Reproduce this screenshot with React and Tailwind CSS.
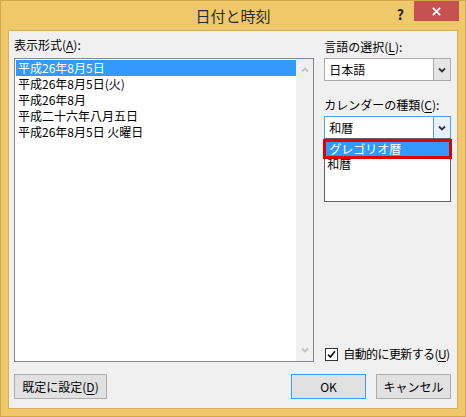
import { useState } from "react";

const font = { fontFamily: '"Noto Sans CJK JP", "Noto Sans", sans-serif' };

const U = ({ children }) => <span className="underline underline-offset-2">{children}</span>;

const formats = [
    "平成26年8月5日",
    "平成26年8月5日(火)",
    "平成26年8月",
    "平成二十六年八月五日",
    "平成26年8月5日 火曜日",
];

const Chevron = ({ className }) => (
    <svg viewBox="0 0 8 6" className={className}>
        <path d="M1 1.5 L4 4.5 L7 1.5" fill="none" stroke="currentColor" strokeWidth="1.8" />
    </svg>
);

const Combo = ({ value, active }) => (
    <div className={`flex h-[23px] border bg-white ${active ? "border-[#569de5]" : "border-[#acacac]"}`}>
        <div className="flex-1 flex items-center pl-[4px] text-[12px] leading-4 text-black">{value}</div>
        <div className={`w-[17px] flex items-center justify-center border-l ${active ? "bg-[#e5f1fb] border-[#569de5]" : "bg-[#e5e5e5] border-[#acacac]"}`}>
            <Chevron className="w-[8px] h-[6px] text-[#333]" />
        </div>
    </div>
);

const Button = ({ children, primary, className = "" }) => (
    <button
        className={`h-[25px] bg-[#e1e1e1] border text-[12px] leading-4 text-black ${primary ? "border-[#3c9bea]" : "border-[#adadad]"} ${className}`}
    >
        {children}
    </button>
);

const App = () => {
    const [selected, setSelected] = useState(0);
    const [auto, setAuto] = useState(true);

    return (
        <div style={font} className="w-[466px] h-[417px] flex flex-col bg-[#f0c86c] border border-[#d2a84c] select-none">
            {/* title bar */}
            <div className="h-[29px] flex items-start relative">
                <div className="flex-1 text-center pt-[5px] text-[15px] leading-5 text-[#2b2b2b]">日付と時刻</div>
                <div className="absolute right-[61px] top-[3px] text-[14px] font-bold text-[#222]">?</div>
                <div className="absolute right-[6px] top-0 w-[45px] h-[20px] bg-[#c75050] flex items-center justify-center">
                    <svg viewBox="0 0 10 10" className="w-[9px] h-[9px]">
                        <path d="M1 1 L9 9 M9 1 L1 9" stroke="white" strokeWidth="2" />
                    </svg>
                </div>
            </div>

            {/* client */}
            <div className="flex-1 mx-[7px] mb-[7px] bg-[#f0f0f0] border border-[#d6b05c] flex flex-col pl-[5px] pr-[6px] pt-[6px] pb-[9px]">
                <div className="flex-1 flex gap-[10px]">
                    {/* left column */}
                    <div className="w-[301px] flex flex-col">
                        <div className="text-[12px] leading-4 text-black h-[21px]">
                            表示形式(<U>A</U>):
                        </div>
                        <div className="h-[304px] flex border border-[#828790] bg-white">
                            <div className="flex-1 pt-[1px] pl-[1px]">
                                {formats.map((f, i) => (
                                    <div
                                        key={f}
                                        onClick={() => setSelected(i)}
                                        className={`h-[16px] pl-[2px] text-[12px] leading-4 ${selected === i ? "bg-[#3399ff] text-white" : "text-black"}`}
                                    >
                                        {f}
                                    </div>
                                ))}
                            </div>
                            <div className="w-[17px] bg-[#f0f0f0] flex flex-col items-center justify-between py-[8px]">
                                <Chevron className="w-[8px] h-[6px] text-[#c2c2c2] rotate-180" />
                                <Chevron className="w-[8px] h-[6px] text-[#c2c2c2]" />
                            </div>
                        </div>
                    </div>

                    {/* right column */}
                    <div className="w-[127px] flex flex-col">
                        <div className="text-[12px] leading-4 text-black h-[21px] pt-[2px]">
                            言語の選択(<U>L</U>):
                        </div>
                        <Combo value="日本語" />
                        <div className="text-[12px] leading-4 text-black h-[35px] pt-[16px]">
                            カレンダーの種類(<U>C</U>):
                        </div>
                        <div className="relative">
                            <Combo value="和暦" active />
                            <div className="absolute left-0 right-0 top-[22px] h-[64px] bg-white border border-[#646464]">
                                <div className="relative z-10 -mx-[2px] h-[20px] border-[3px] border-[#e00000] bg-[#3399ff] flex items-center pl-[3px] text-[12px] leading-4 text-white">
                                    グレゴリオ暦
                                </div>
                                <div className="-mt-[3px] pl-[2px] text-[12px] leading-4 text-black">和暦</div>
                            </div>
                        </div>
                        <div className="mt-auto flex items-center gap-[5px] pl-[1px]">
                            <div
                                onClick={() => setAuto(!auto)}
                                className="shrink-0 w-[13px] h-[13px] border border-[#333] bg-white flex items-center justify-center"
                            >
                                {auto && (
                                    <svg viewBox="0 0 10 10" className="w-[9px] h-[9px]">
                                        <path d="M1.2 5.2 L3.8 7.8 L8.8 1.5" fill="none" stroke="#111" strokeWidth="1.8" />
                                    </svg>
                                )}
                            </div>
                            <span className="whitespace-nowrap text-[12px] leading-4 tracking-[-0.6px] text-black">
                                自動的に更新する(<U>U</U>)
                            </span>
                        </div>
                    </div>
                </div>

                {/* buttons */}
                <div className="flex items-center mt-[12px]">
                    <Button className="w-[93px]">
                        既定に設定(<U>D</U>)
                    </Button>
                    <div className="flex-1" />
                    <Button primary className="w-[75px]">OK</Button>
                    <Button className="w-[75px] ml-[10px]">キャンセル</Button>
                </div>
            </div>
        </div>
    );
};

export default App;
